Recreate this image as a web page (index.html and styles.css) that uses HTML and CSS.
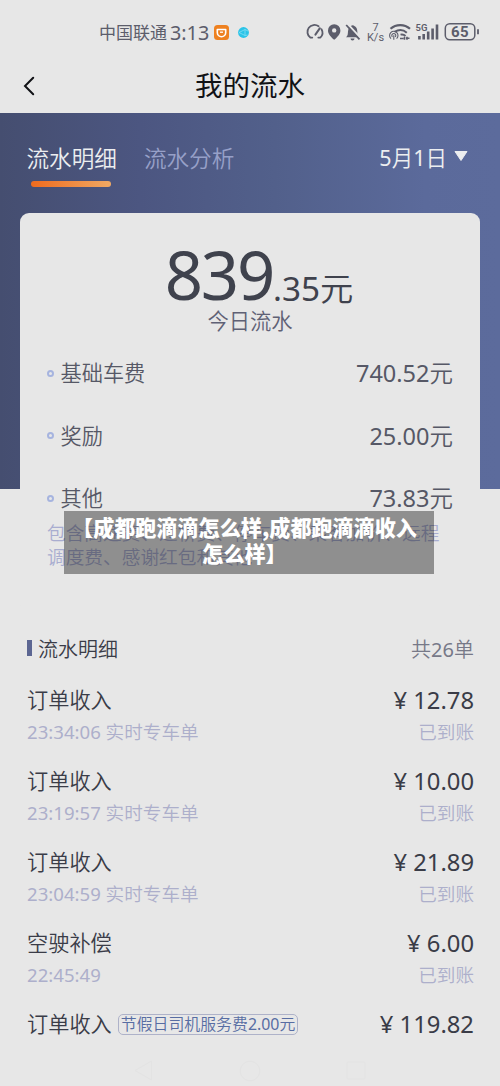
FILE: index.html
```html
<!DOCTYPE html>
<html lang="zh-CN">
<head>
<meta charset="utf-8">
<title>我的流水</title>
<link rel="stylesheet" href="styles.css">
</head>
<body>
<div class="status">
  <span class="carrier">中国联通</span>
  <span class="clock">3:13</span>
  <svg class="app-icon" width="15" height="15" viewBox="0 0 15 15"><rect width="15" height="15" rx="3.5" fill="#ee8120"/><path d="M3.300 4.500h8.400v3a4.200 4.200 0 0 1-8.400 0z" fill="none" stroke="#fff" stroke-width="1.600" stroke-linejoin="round"/><path d="M6 7.200h3" stroke="#fff" stroke-width="1.300"/></svg>
  <svg class="dot-icon" width="11" height="11" viewBox="0 0 11 11"><circle cx="5.500" cy="5.500" r="5.400" fill="#2bc4e8"/><path d="M1 5.500l6-3v6zM7 2.500l3 1.500M7 8.500l2.500-.5" fill="none" stroke="#8fe3f5" stroke-width=".7"/></svg>
  <svg class="sys" width="174" height="24" viewBox="0 0 174 24" fill="none" stroke="#5c5d6b">
    <path d="M4.300 17.600A6.900 6.900 0 0 1 12.600 6.300M15.500 9.200a6.900 6.900 0 0 1-1.200 8.400M4.300 17.600h2M12.300 17.600h2" stroke-width="1.800" stroke-linecap="round"/>
    <path d="M9.400 14.600l4.500-6.400" stroke-width="2" stroke-linecap="round"/>
    <path d="M28.200 4.200a6.200 6.200 0 0 0-6.200 6.200c0 4 3.500 6.800 6.200 9.400 2.700-2.600 6.200-5.400 6.200-9.400a6.200 6.200 0 0 0-6.200-6.200zm0 4a2.200 2.200 0 1 1 0 4.400 2.200 2.200 0 0 1 0-4.400z" fill="#5c5d6b" stroke="none"/>
    <path d="M40 17.200c2-1.300 1.800-3.500 2-6 .3-3.500 2-5 4.500-6 3.500.8 4.700 3.200 4.800 6 .1 2.700 0 4.500 2 6zM44.500 18.400h4a2 2 0 0 1-4 0z" fill="#5c5d6b" stroke="none"/>
    <path d="M41.600 4L55 18.500" stroke="#e7e7e7" stroke-width="2"/><path d="M40.200 5L53.500 19.300" stroke-width="1.800"/>
    <path d="M84.500 8.800a14.500 14.500 0 0 1 19.500 0" stroke-width="2.200"/>
    <path d="M88.500 11.800c4.500-2.500 9-2 12.300.9M94.500 14.600q3-.7 5 1.400" stroke-width="2"/>
    <path d="M85 18.600a4.200 4.200 0 1 1 5.600 0M86.400 16.900a2 2 0 1 1 2.800 0M87.800 15.200v4.500" stroke-width="1.100"/>
    <path d="M94 18.500h3.500m1-1.800v3m2.500-3v3m-1-1.500h3.500" stroke-width="1.600"/>
    <path d="M113.400 16v3.500M117.700 14v5.500M122.200 11.500v8M126.600 8.500v11M131 4.500v15" stroke-width="2.600"/>
    <rect x="139.300" y="3.800" width="29.500" height="16" rx="4.500" stroke-width="1.500"/>
    <path d="M172 9.300v5" stroke-width="1.800"/>
    <g fill="#5c5d6b" stroke="none"><text x="69.500" y="10.800" class="t-rate" text-anchor="middle">7</text><text x="69.500" y="20.600" class="t-rate" text-anchor="middle">K/s</text><text x="109.500" y="11" class="t-5g">5G</text><text x="153.900" y="17.300" class="t-bat" text-anchor="middle">65</text></g>
  </svg>
</div>
<header class="header">
  <svg class="back" width="12" height="20" viewBox="0 0 12 20"><path d="M10.200 1.800L2 10l8.200 8.200" fill="none" stroke="#111216" stroke-width="2" stroke-linecap="round"/></svg>
  <h1 class="title">我的流水</h1>
</header>
<main class="main">
  <nav class="tabs">
    <div class="tab tab-on">流水明细</div>
    <div class="tab">流水分析</div>
    <div class="date"><span><b class="num">5</b>月<b class="num">1</b>日</span><svg width="14" height="10" viewBox="0 0 14 10"><path d="M1 .5h12L7 9.500z" fill="#eceef0" stroke="#eceef0" stroke-linejoin="round"/></svg></div>
  </nav>
  <section class="card">
    <div class="total"><span class="int">839</span><span class="dec"><b class="num">.35</b>元</span></div>
    <div class="caption">今日流水</div>
    <div class="rows">
      <div class="row"><i class="ring"></i><span class="name">基础车费</span><span class="sum"><b class="num">740.52</b>元</span></div>
      <div class="row"><i class="ring"></i><span class="name">奖励</span><span class="sum"><b class="num">25.00</b>元</span></div>
      <div class="row"><i class="ring"></i><span class="name">其他</span><span class="sum"><b class="num">73.83</b>元</span></div>
    </div>
    <div class="note">包含高速费、过桥费、停车费、乘客加价、远程<br>调度费、感谢红包和其他
      <div class="banner">【成都跑滴滴怎么样,成都跑滴滴收入<br>怎么样】</div>
    </div>
  </section>
  <section class="list">
    <div class="list-head"><i class="bar"></i><span>流水明细</span><span class="count">共<b class="num">26</b>单</span></div>
    <div class="item"><div class="line"><span>订单收入</span><span class="money">¥ 12.78</span></div><div class="sub"><span><b class="num">23:34:06</b> 实时专车单</span><span>已到账</span></div></div>
    <div class="item"><div class="line"><span>订单收入</span><span class="money">¥ 10.00</span></div><div class="sub"><span><b class="num">23:19:57</b> 实时专车单</span><span>已到账</span></div></div>
    <div class="item"><div class="line"><span>订单收入</span><span class="money">¥ 21.89</span></div><div class="sub"><span><b class="num">23:04:59</b> 实时专车单</span><span>已到账</span></div></div>
    <div class="item"><div class="line"><span>空驶补偿</span><span class="money">¥ 6.00</span></div><div class="sub"><span><b class="num">22:45:49</b></span><span>已到账</span></div></div>
    <div class="line"><span>订单收入</span><span class="tag">节假日司机服务费<b class="num">2.00</b>元</span><span class="money">¥ 119.82</span></div>
  </section>
</main>
<footer class="sysnav">
  <svg width="232" height="22" viewBox="0 0 232 22" fill="none" stroke="#e3e3e3"><path d="M17.500 1v19L1 10.500z"/><circle cx="116" cy="11" r="9.800"/><rect x="213" y="2" width="18" height="17" rx="1"/></svg>
</footer>
</body>
</html>
```

FILE: styles.css
```css
* { box-sizing: border-box; }
body {
  margin: 0;
  width: 500px;
  height: 1086px;
  overflow: hidden;
  background: #e7e7e7;
  color: #3a3c47;
  font-family: "Noto Sans", "Noto Sans CJK SC", sans-serif;
  font-weight: 350;
}
.num { font-weight: 400; }
.status {
  display: flex;
  align-items: center;
  height: 58px;
  padding: 6px 20px 0 99px;
  color: #5c5d6b;
}
.carrier { padding-top: 1px; font-size: 17px; font-weight: 400; line-height: 24px; }
.clock { margin-left: 3px; padding-top: 2px; font-size: 19.800px; font-weight: 400; line-height: 24px; }
.app-icon { margin-left: 5px; }
.dot-icon { margin-left: 9px; }
.sys { margin-left: auto; flex: none; }
.t-rate { font: 11px "Roboto", sans-serif; }
.t-5g { font: 600 9.500px "Roboto", sans-serif; }
.t-bat { font: 700 15px "Roboto", sans-serif; letter-spacing: .3px; }
.header { display: flex; align-items: center; height: 55px; padding-left: 23px; }
.back { flex: none; }
.title {
  flex: 1;
  margin: 1px 35px 0 0;
  text-align: center;
  font-size: 27.500px;
  font-weight: 400;
  line-height: 40px;
  color: #111216;
}
.main {
  padding: 0 20px;
  background: linear-gradient(90deg, #454e70 0%, #4c5681 28%, #52608b 55%, #5b6a9b 85%, #5c6b9c 100%) no-repeat 0 0 / 100% 376px;
}
.tabs { display: flex; height: 100px; padding: 30px 12px 0 6.500px; color: #97a0c8; }
.tab { margin-right: 27px; font-size: 22.600px; line-height: 32px; white-space: nowrap; }
.tab-on { color: #eceef0; }
.tab-on::after {
  content: "";
  display: block;
  width: 80px;
  height: 6px;
  margin: 6px 0 0 4px;
  border-radius: 3px;
  background: linear-gradient(90deg, #ef6b1e, #f0a964);
}
.date {
  display: flex;
  align-items: center;
  gap: 7px;
  height: 26px;
  margin-left: auto;
  font-size: 21.500px;
  color: #eceef0;
}
.card { height: 400px; padding: 23px 27px 0; border-radius: 9px; background: #e7e7e7; }
.total { display: flex; align-items: baseline; justify-content: center; height: 72px; padding-left: 18px; color: #3f424d; }
.int { font-size: 67px; line-height: 76px; font-weight: 400; letter-spacing: -2.200px; }
.dec { position: relative; top: 1px; font-size: 33.300px; line-height: 40px; }
.caption { text-align: center; font-size: 21.300px; line-height: 26px; color: #5f6175; }
.rows { display: grid; gap: 32.500px; margin-top: 24px; color: #565866; }
.row { display: flex; align-items: center; height: 30px; }
.ring { width: 7px; height: 7px; border: 2px solid #a6b4df; border-radius: 50%; }
.name { margin-left: 6.500px; font-size: 21.200px; line-height: 30px; }
.sum { margin-left: auto; font-size: 23.500px; line-height: 30px; }
.note {
  position: relative;
  margin-top: 8px;
  font-size: 18.700px;
  line-height: 24px;
  color: #a9add0;
  white-space: nowrap;
}
.banner {
  position: absolute;
  left: 17px;
  top: -10px;
  width: 370px;
  height: 63px;
  padding: 3px 9px 0 0;
  background: rgba(0, 0, 0, .38);
  color: #fff;
  font-family: "Noto Sans CJK SC", sans-serif;
  font-size: 21.100px;
  font-weight: 900;
  line-height: 26px;
  text-align: center;
}
.list { padding: 20px 6px 0 7px; }
.list-head { display: flex; align-items: center; height: 30px; margin-bottom: 21px; font-size: 20px; }
.bar { width: 5px; height: 16px; margin-right: 6px; background: #5c6692; }
.count { margin-left: auto; color: #777988; }
.item { height: 81px; }
.line { display: flex; align-items: center; height: 32px; font-size: 21.200px; line-height: 32px; }
.money { margin-left: auto; font-size: 23.800px; font-weight: 400; }
.sub { display: flex; justify-content: space-between; font-size: 18.600px; line-height: 32px; color: #adafcb; }
.tag {
  height: 21px;
  margin-left: 6px;
  padding: 0 2px;
  border: 1px solid #aeb2c9;
  border-radius: 5px;
  font-size: 15.900px;
  line-height: 19px;
  color: #576da3;
}
.sysnav { display: flex; justify-content: center; padding-top: 20px; }
```
